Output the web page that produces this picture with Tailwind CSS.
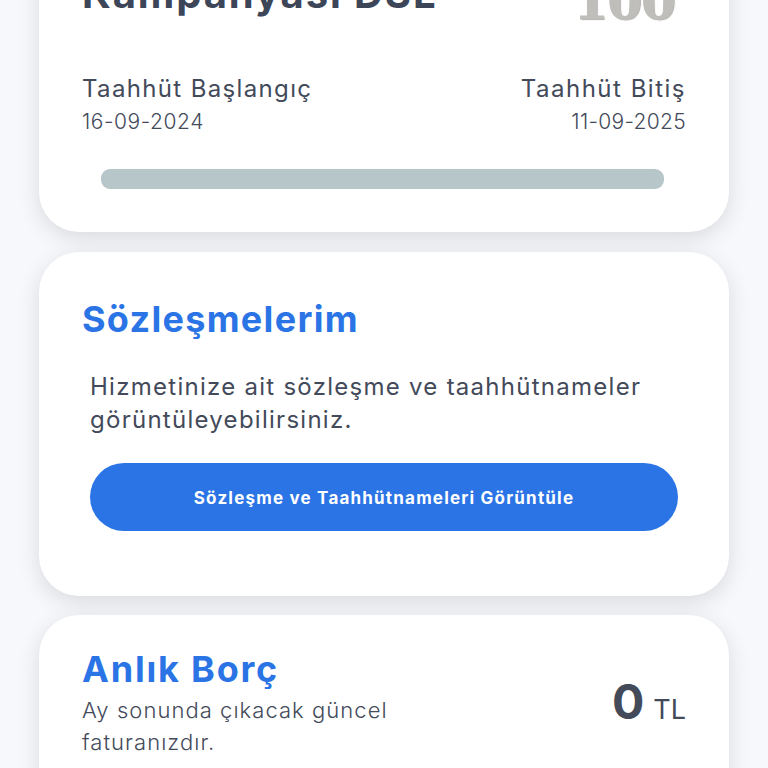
<!DOCTYPE html>
<html lang="tr">
<head>
  <meta charset="UTF-8">
  <meta name="viewport" content="width=device-width, initial-scale=1">
  <title>Sözleşmelerim</title>
  <script src="https://cdn.jsdelivr.net/npm/@tailwindcss/browser@4"></script>
</head>
<body class="bg-[#f7f8fc] font-['Inter','Noto_Sans',sans-serif] text-[#434a5a]">
  <div class="h-[768px] overflow-hidden flex flex-col px-[39px]">

    <!-- Kampanya card -->
    <div class="shrink-0 h-[292px] -mt-[60px] bg-white rounded-[40px] shadow-[0_6px_22px_rgba(0,0,0,0.12)] px-[43px] flex flex-col">
      <div class="h-[116px] flex justify-between items-start">
        <div class="mt-[34px] text-[40px] leading-[40px] font-bold text-[#3d4658] tracking-[1.9px]">Kampanyası DSL</div>
        <div class="mt-[37px] mr-[11px] text-[50px] leading-[50px] font-bold font-['DejaVu_Serif',serif] tracking-[-1px] text-[#bfbebb] [-webkit-text-stroke:1px_#bfbebb] [text-shadow:1px_1px_1px_#a9a9a5]">100</div>
      </div>
      <div class="mt-[16px] flex justify-between">
        <div>
          <div class="text-[24px] leading-[34px] tracking-[1.35px]">Taahhüt Başlangıç</div>
          <div class="mt-[1px] text-[21px] leading-[30px] font-light tracking-[0.55px]">16-09-2024</div>
        </div>
        <div class="text-right">
          <div class="text-[24px] leading-[34px] tracking-[1.5px]">Taahhüt Bitiş</div>
          <div class="mt-[1px] text-[21px] leading-[30px] font-light tracking-[0.3px]">11-09-2025</div>
        </div>
      </div>
      <div class="mt-[32px] ml-[19px] mr-[22px] h-[20px] rounded-[9px] bg-[#b7c6c9]"></div>
    </div>

    <!-- Sözleşmelerim card -->
    <div class="shrink-0 mt-[20px] h-[344px] bg-white rounded-[40px] shadow-[0_6px_22px_rgba(0,0,0,0.12)] px-[43px] pt-[46px]">
      <h2 class="text-[36px] leading-[42px] font-bold text-[#2b74e6] tracking-[1.3px]">Sözleşmelerim</h2>
      <p class="mt-[30px] ml-[8px] text-[24px] leading-[33px] tracking-[1.27px]">Hizmetinize ait sözleşme ve taahhütnameler görüntüleyebilirsiniz.</p>
      <button class="mt-[27px] ml-[8px] w-[588px] h-[68px] pt-[3px] rounded-full bg-[#2b74e6] text-white text-[17px] font-bold tracking-[1.2px]">Sözleşme ve Taahhütnameleri Görüntüle</button>
    </div>

    <!-- Anlık Borç card -->
    <div class="shrink-0 mt-[19px] h-[200px] bg-white rounded-[40px] shadow-[0_6px_22px_rgba(0,0,0,0.12)] px-[43px] pt-[32px] flex justify-between">
      <div class="w-[340px]">
        <h2 class="text-[36px] leading-[44px] font-bold text-[#2b74e6] tracking-[1.8px]">Anlık Borç</h2>
        <p class="mt-[3px] text-[22px] leading-[32px] font-light tracking-[1.05px]">Ay sonunda çıkacak güncel faturanızdır.</p>
      </div>
      <div class="flex items-baseline gap-[9px] pt-[27px]">
        <span class="text-[48px] leading-[56px] font-bold">0</span>
        <span class="text-[27px] leading-[32px]">TL</span>
      </div>
    </div>

  </div>
</body>
</html>
